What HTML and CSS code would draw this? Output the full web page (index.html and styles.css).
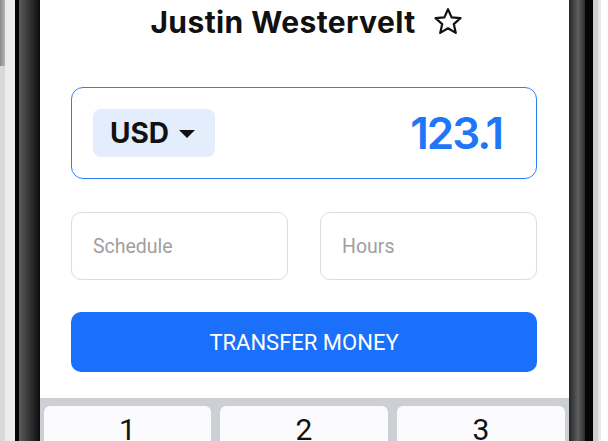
FILE: index.html
```html
<!DOCTYPE html>
<html lang="en">
  <head>
    <meta charset="UTF-8" />
    <meta name="viewport" content="width=device-width, initial-scale=1.0" />
    <title>Transfer</title>
    <link rel="stylesheet" href="styles.css">
  </head>

  <body>
    <div class="phone">
      <div class="bezel-left"></div>

      <div class="screen">
        <div class="title-row">
          <h1 class="title">Justin Westervelt</h1>
          <svg class="star" width="30" height="29" viewBox="0 0 30 29">
            <path d="M15 2.2 L18.6 10.4 L27.5 11.2 L20.8 17.1 L22.8 25.9 L15 21.3 L7.2 25.9 L9.2 17.1 L2.5 11.2 L11.4 10.4 Z"
              fill="none" stroke="#111" stroke-width="2.2" stroke-linejoin="round" />
          </svg>
        </div>

        <div class="amount-card">
          <button class="currency">
            USD
            <svg class="caret" width="16" height="8" viewBox="0 0 16 8">
              <path d="M0 0 H16 L8 8 Z" fill="#111" />
            </svg>
          </button>
          <div class="amount">123.1</div>
        </div>

        <div class="fields">
          <input class="field" type="text" placeholder="Schedule" />
          <input class="field" type="text" placeholder="Hours" />
        </div>

        <button class="transfer">TRANSFER MONEY</button>

        <div class="keypad">
          <div class="key">1</div>
          <div class="key">2</div>
          <div class="key">3</div>
        </div>
      </div>

      <div class="bezel-right"></div>
    </div>
  </body>
</html>
```

FILE: styles.css
```css
body {
  margin: 0;
  width: 608px;
  height: 441px;
  overflow: hidden;
  background-color: #fff;
}

.phone {
  display: flex;
  height: 441px;
  overflow: hidden;
}

.bezel-left {
  width: 40px;
  flex-shrink: 0;
  background:
    linear-gradient(to right, #8c8c8c, #b4b4b4) no-repeat 0 0 / 5px 66px,
    linear-gradient(to right, #d8d8d8 0 5px, #ececec 5px 15px, #050505 15px 19px, #5c5c5c 19px, #0c0c0c 40px);
}

.bezel-right {
  width: 39px;
  flex-shrink: 0;
  background: linear-gradient(to right, #262626 0, #5e5e5e 9px, #2c2c2c 16px, #050505 16px 24px, #d0d0d0 24px 29px, #e8e8e8 29px 32px, #fff 32px);
}

.screen {
  width: 529px;
  flex-shrink: 0;
  display: flex;
  flex-direction: column;
  background-color: #fff;
}

.screen > * {
  flex-shrink: 0;
}

.title-row {
  display: flex;
  justify-content: center;
  align-items: center;
  gap: 17px;
  height: 45px;
  padding-left: 4px;
}

.title {
  margin: 0;
  font-family: Inter, "Liberation Sans", sans-serif;
  font-size: 30px;
  font-weight: 700;
  line-height: 45px;
  color: #111;
  letter-spacing: 0.4px;
}

.star {
  margin-top: -2px;
}

.amount-card {
  display: flex;
  align-items: center;
  justify-content: space-between;
  height: 92px;
  margin: 42px 32px 0 31px;
  padding: 0 34px 0 21px;
  border: 1.5px solid #2f80f6;
  border-radius: 12px;
  box-sizing: border-box;
}

.currency {
  display: flex;
  align-items: center;
  gap: 10px;
  width: 122px;
  height: 48px;
  padding: 0 0 0 17px;
  border: none;
  border-radius: 8px;
  background-color: #e3edfc;
  font-family: Inter, "Liberation Sans", sans-serif;
  font-size: 28px;
  font-weight: 700;
  color: #111;
}

.caret {
  margin-top: 2px;
}

.amount {
  font-family: Inter, "Liberation Sans", sans-serif;
  font-size: 44px;
  font-weight: 600;
  color: #1f76f6;
  letter-spacing: -2px;
}

.fields {
  display: flex;
  gap: 32px;
  margin: 33px 32px 0 31px;
}

.field {
  flex: 1;
  min-width: 0;
  height: 68px;
  padding: 0 21px;
  border: 1.5px solid #dcdcdc;
  border-radius: 10px;
  box-sizing: border-box;
  font-family: Roboto, "Liberation Sans", sans-serif;
  font-size: 19.5px;
  outline: none;
}

.field::placeholder {
  color: #a0a0a0;
}

.transfer {
  height: 60px;
  margin: 32px 32px 0 31px;
  border: none;
  border-radius: 10px;
  background-color: #1a70fb;
  color: white;
  font-family: Roboto, "Liberation Sans", sans-serif;
  font-size: 22px;
  font-weight: 400;
}

.keypad {
  display: grid;
  grid-template-columns: 167px 168px 168px;
  column-gap: 9px;
  height: 80px;
  margin-top: 26px;
  padding: 8px 4px 0 4px;
  background-color: #ccd0d4;
}

.key {
  height: 60px;
  border-radius: 6px;
  background-color: #fbfbfd;
  text-align: center;
  font-family: Roboto, "Liberation Sans", sans-serif;
  font-size: 30px;
  line-height: 48px;
  color: #111;
}
```
